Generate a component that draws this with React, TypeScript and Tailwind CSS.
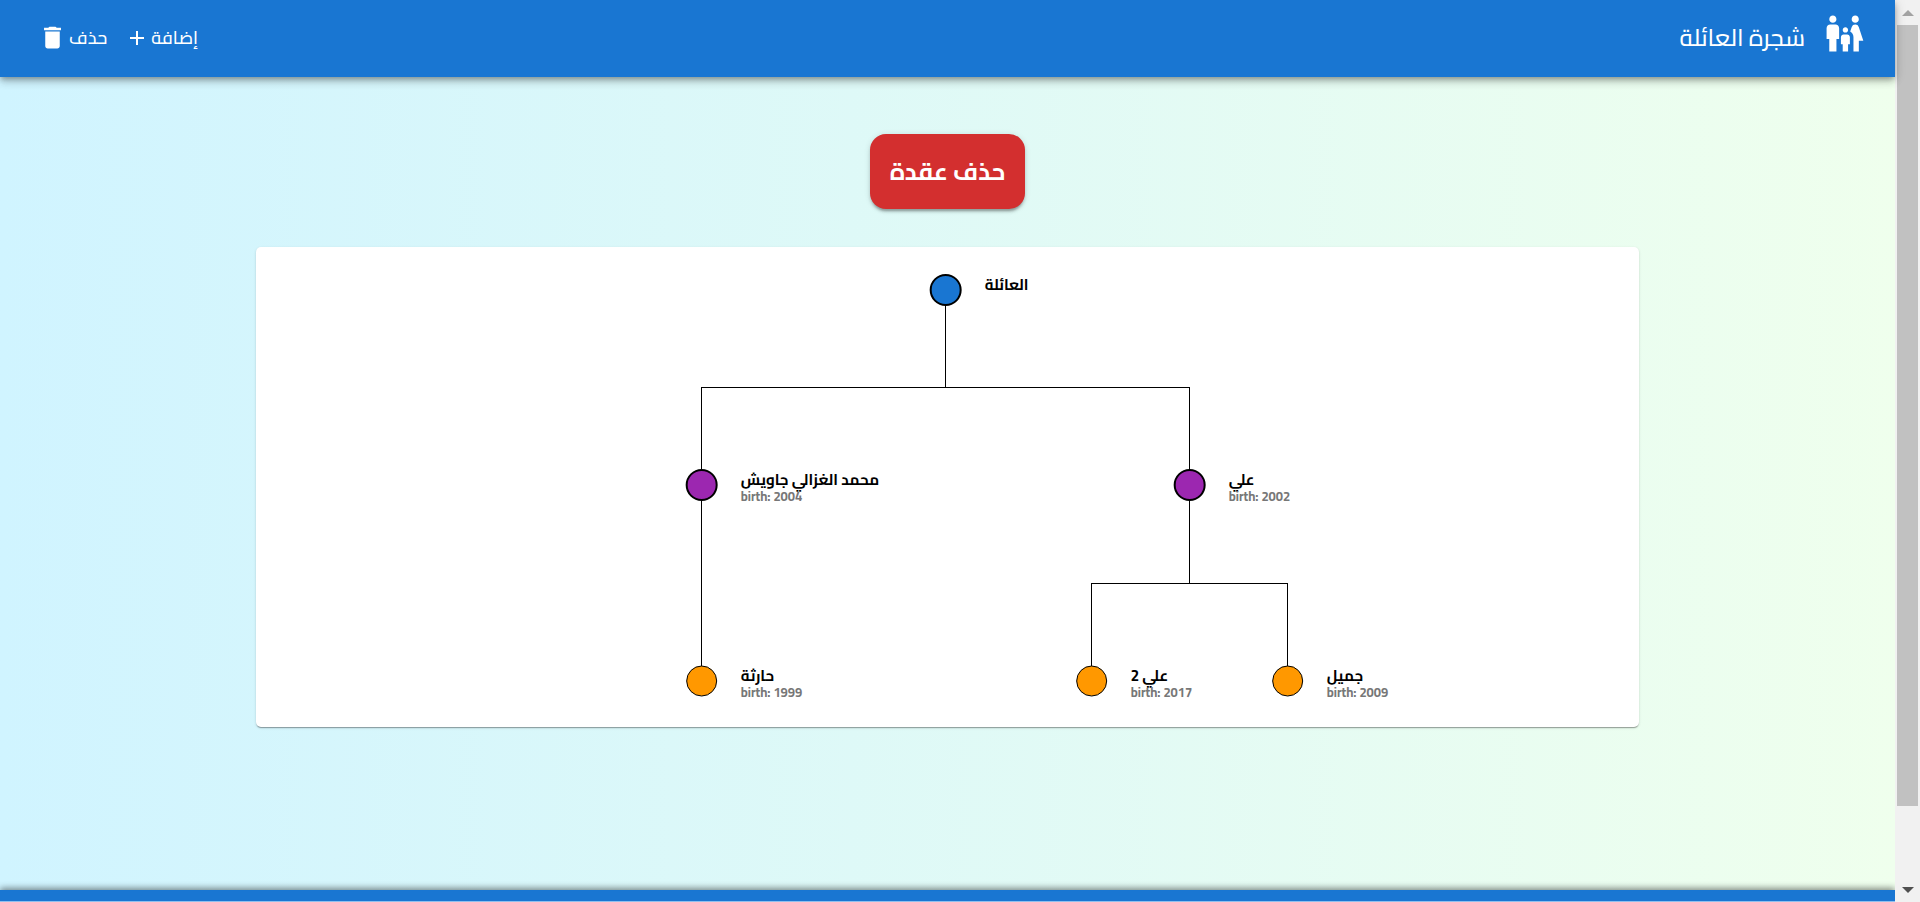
import React from "react";
import { MdAdd, MdDelete, MdFamilyRestroom } from "react-icons/md";

type Person = {
  name: string;
  birth?: number;
  x: number;
  y: number;
  kind: "root" | "parent" | "leaf";
};

const people: Person[] = [
  { name: "العائلة", x: 0, y: 0, kind: "root" },
  { name: "محمد الغزالي جاويش", birth: 2004, x: -244, y: 195, kind: "parent" },
  { name: "علي", birth: 2002, x: 244, y: 195, kind: "parent" },
  { name: "حارثة", birth: 1999, x: -244, y: 391, kind: "leaf" },
  { name: "علي 2", birth: 2017, x: 146, y: 391, kind: "leaf" },
  { name: "جميل", birth: 2009, x: 342, y: 391, kind: "leaf" },
];

const links = [
  "M0 0V97H-244V195",
  "M0 0V97H244V195",
  "M-244 195V391",
  "M244 195V293H146V391",
  "M244 195V293H342V391",
];

const fills = {
  root: "fill-[#1976d2] stroke-2",
  parent: "fill-[#9c27b0] stroke-2",
  leaf: "fill-[#ff9800] stroke-1",
};

function PersonNode({ person }: { person: Person }) {
  return (
    <g transform={`translate(${person.x} ${person.y})`}>
      <circle r="15" className={`stroke-black ${fills[person.kind]}`} />
      <text x="39" y="0" className="fill-black text-[15px] font-bold">
        {person.name}
      </text>
      {person.birth && (
        <text x="39" y="16" className="fill-[#777] text-[13px] font-bold">
          {`birth: ${person.birth}`}
        </text>
      )}
    </g>
  );
}

function FamilyTree() {
  return (
    <svg className="block h-[480px] w-full" direction="ltr" role="img" aria-label="شجرة العائلة">
      <svg x="50%" y="43" overflow="visible">
        <g transform="translate(-2 0)">
          <g className="fill-none stroke-black stroke-1" shapeRendering="crispEdges">
            {links.map((d) => (
              <path key={d} d={d} />
            ))}
          </g>
          {people.map((person) => (
            <PersonNode key={person.name} person={person} />
          ))}
        </g>
      </svg>
    </svg>
  );
}

function Header() {
  return (
    <header className="z-10 flex h-[77px] shrink-0 items-center justify-between bg-[#1976d2] pr-[29px] pb-0.5 pl-[38px] text-white shadow-[0_3px_5px_-1px_rgba(0,0,0,0.25),0_5px_8px_rgba(0,0,0,0.15),0_1px_12px_rgba(0,0,0,0.12)]">
      <div className="flex items-center gap-[18px]">
        <MdFamilyRestroom className="mb-2 size-[43px]" />
        <h1 className="text-2xl leading-8 font-medium">شجرة العائلة</h1>
      </div>
      <nav className="flex items-center gap-[18px]">
        <button type="button" className="flex items-center gap-0.5 text-lg leading-6 font-medium">
          إضافة
          <MdAdd className="size-6" />
        </button>
        <button type="button" className="flex items-center gap-0.5 text-lg leading-6 font-medium">
          حذف
          <MdDelete className="size-[29px]" />
        </button>
      </nav>
    </header>
  );
}

function Scrollbar() {
  return (
    <div className="flex w-[25px] shrink-0 flex-col items-center bg-[#f1f1f1]" aria-hidden="true">
      <div className="flex h-[25px] items-center justify-center">
        <svg viewBox="0 0 12 6" className="h-[6px] w-3 fill-[#a3a3a3]">
          <path d="M0 6 6 0l6 6z" />
        </svg>
      </div>
      <div className="min-h-0 w-[21px] flex-1">
        <div className="h-11/12 bg-[#c1c1c1]" />
      </div>
      <div className="flex h-[25px] items-center justify-center">
        <svg viewBox="0 0 12 6" className="h-[6px] w-3 fill-[#505050]">
          <path d="M0 0h12L6 6z" />
        </svg>
      </div>
    </div>
  );
}

export default function App() {
  return (
    <div className="flex h-screen overflow-hidden font-['Cairo','Noto_Sans','DejaVu_Sans',sans-serif]">
      <div dir="rtl" className="flex min-w-0 flex-1 flex-col bg-linear-to-r from-[#d0f4ff] to-[#efffed]">
        <Header />
        <main className="flex flex-1 flex-col items-center gap-[38px] pt-[57px]">
          <button
            type="button"
            className="rounded-2xl bg-[#d32f2f] px-5 py-5 text-2xl leading-[35px] font-bold text-white shadow-[0_4px_2px_-2px_rgba(0,0,0,0.2),0_3px_3px_rgba(0,0,0,0.14),0_1px_6px_rgba(0,0,0,0.12)]"
          >
            حذف عقدة
          </button>
          <section className="w-[73%] rounded-[5px] bg-white shadow-[0_2px_1px_-1px_rgba(0,0,0,0.2),0_1px_1px_rgba(0,0,0,0.14),0_1px_3px_rgba(0,0,0,0.12)]">
            <FamilyTree />
          </section>
        </main>
        <footer className="h-3 shrink-0 border-b border-[#90c0ee] bg-[#1976d2] shadow-[0_-2px_6px_rgba(0,0,0,0.45)]" />
      </div>
      <Scrollbar />
    </div>
  );
}
